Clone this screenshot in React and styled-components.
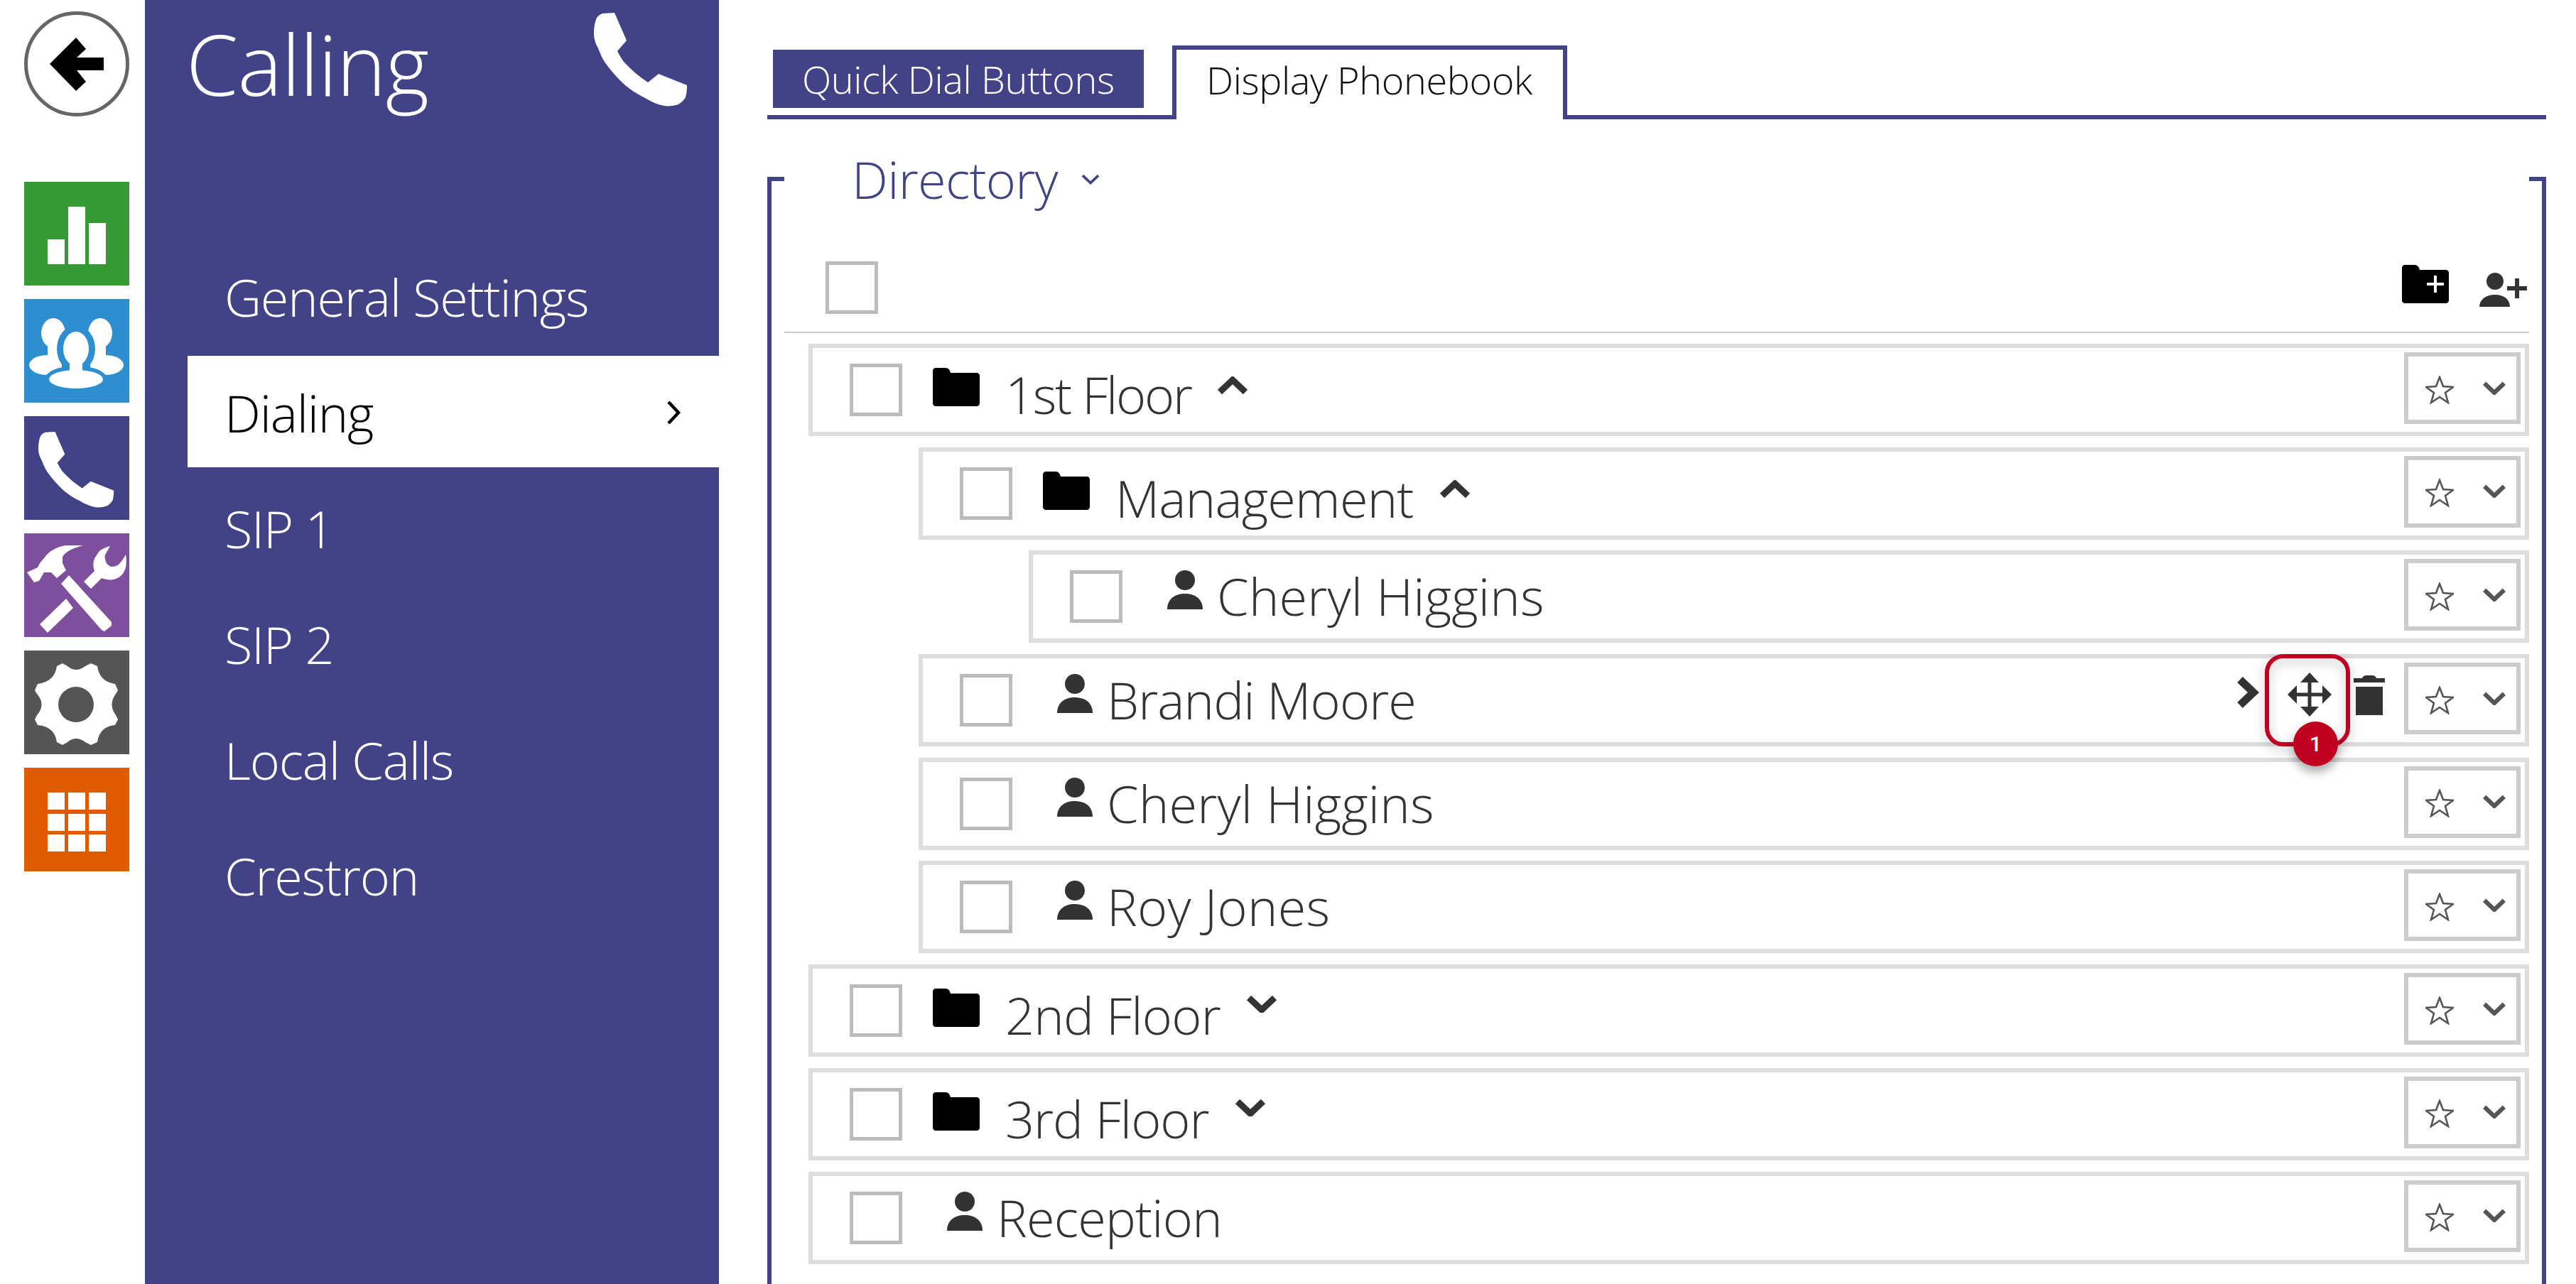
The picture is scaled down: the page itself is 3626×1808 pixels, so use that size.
import React from 'react'
import styled, { createGlobalStyle } from 'styled-components'

const INDIGO = '#424387'
const FONT = '"Open Sans", "Noto Sans", sans-serif'

const GlobalStyle = createGlobalStyle`
  html, body {
    margin: 0;
    padding: 0;
    background: #fff;
    font-family: ${FONT};
  }
  * {
    box-sizing: border-box;
  }
`

const Page = styled.div`
  display: flex;
  width: 3626px;
  height: 1808px;
  overflow: hidden;
  background: #fff;
`

const Rail = styled.nav`
  flex: 0 0 204px;
  display: flex;
  flex-direction: column;
  padding: 16px 0 0 34px;
`

const BackButton = styled.div`
  display: flex;
  align-items: center;
  justify-content: center;
  width: 148px;
  height: 148px;
  margin-bottom: 92px;
  border: 5px solid #666;
  border-radius: 50%;
  background: #fff;
`

const Tile = styled.div`
  display: flex;
  width: 148px;
  height: 146px;
  margin-bottom: 19px;
  background: ${(p) => p.color};

  svg {
    display: block;
  }
`

const TilePhone = styled.div`
  padding: 22px 0 0 20px;
`

const Sidebar = styled.aside`
  flex: 0 0 808px;
  display: flex;
  flex-direction: column;
  background: ${INDIGO};
  color: #fff;
`

const SidebarHeader = styled.header`
  display: flex;
  align-items: flex-start;
  justify-content: space-between;
  height: 338px;
  padding: 18px 44px 0 58px;
`

const Heading = styled.h1`
  margin: 0;
  font-size: 118px;
  font-weight: 300;
  line-height: 144px;
  letter-spacing: -0.8px;
`

const MenuItem = styled.div`
  display: flex;
  align-items: center;
  justify-content: space-between;
  height: 157px;
  margin: 0 0 6px 60px;
  padding: 2px 54px 0 52px;
  font-size: 72px;
  font-weight: 300;
  letter-spacing: -1.2px;
  background: ${(p) => (p.$active ? '#fff' : 'transparent')};
  color: ${(p) => (p.$active ? '#000' : '#fff')};
`

const Main = styled.main`
  flex: 1;
  display: flex;
  flex-direction: column;
  padding: 0 42px 0 68px;
`

const TabBar = styled.div`
  display: flex;
  align-items: flex-start;
  height: 168px;
  padding: 64px 0 0 8px;
  border-bottom: 6px solid ${INDIGO};
`

const Tab = styled.div`
  display: flex;
  align-items: center;
  height: 82px;
  width: 522px;
  margin-top: 6px;
  padding-left: 41px;
  font-size: 54px;
  font-weight: 300;
  letter-spacing: -0.4px;
  background: ${INDIGO};
  color: #fff;
`

const ActiveTab = styled.div`
  display: flex;
  align-items: center;
  width: 556px;
  height: 104px;
  margin-left: 40px;
  padding: 0 0 14px 42px;
  font-size: 54px;
  font-weight: 300;
  letter-spacing: -0.4px;
  border: 6px solid ${INDIGO};
  border-bottom: none;
  background: #fff;
  color: #111;
`

const Panel = styled.section`
  position: relative;
  flex: 1;
  margin-top: 81px;
  padding: 0 18px;
  border-left: 6px solid ${INDIGO};
  border-right: 6px solid ${INDIGO};

  &::before,
  &::after {
    content: '';
    position: absolute;
    top: 0;
    height: 6px;
    background: ${INDIGO};
  }
  &::before {
    left: 0;
    width: 18px;
  }
  &::after {
    right: 0;
    width: 18px;
  }
`

const Title = styled.div`
  display: flex;
  align-items: center;
  gap: 32px;
  height: 100px;
  margin: -47px 0 0 95px;
  font-size: 72px;
  font-weight: 300;
  letter-spacing: -0.7px;
  color: ${INDIGO};
`

const Toolbar = styled.div`
  display: flex;
  align-items: flex-start;
  height: 167px;
  border-bottom: 2px solid #ccc;
  padding: 66px 3px 0 58px;
`

const Checkbox = styled.div`
  flex: 0 0 74px;
  height: 74px;
  border: 5px solid #bbb;
  background: #fff;
`

const ToolbarIcons = styled.div`
  display: flex;
  align-items: flex-start;
  gap: 43px;
  margin-left: auto;
  margin-top: 5px;
`

const PersonPlusSlot = styled.div`
  margin-top: 11px;
`

const TreeList = styled.div`
  display: flex;
  flex-direction: column;
  gap: 15.7px;
  margin-top: 15px;
`

const Row = styled.div`
  position: relative;
  z-index: ${(p) => (p.$raised ? 1 : 0)};
  display: flex;
  align-items: flex-start;
  height: 130px;
  margin-left: ${(p) => 34 + p.$level * 155}px;
  padding: 22px 6px 0 52px;
  border: 6px solid #ddd;
  background: #fff;
`

const RowIcon = styled.div`
  display: flex;
  flex: 0 0 auto;
  margin-left: ${(p) => p.$left}px;
  margin-top: ${(p) => p.$top}px;
`

const Label = styled.span`
  margin-left: ${(p) => p.$left}px;
  margin-top: ${(p) => p.$top}px;
  font-size: 72px;
  font-weight: 300;
  line-height: 90px;
  letter-spacing: ${(p) => p.$tracking}px;
  white-space: nowrap;
  color: #333;
`

const ToggleIcon = styled.div`
  display: flex;
  margin-left: 36px;
  margin-top: ${(p) => (p.$open ? 18 : 14)}px;
`

const RowActions = styled.div`
  display: flex;
  align-items: flex-start;
  margin-left: auto;
`

const StarBox = styled.div`
  display: flex;
  align-items: center;
  justify-content: space-between;
  flex: 0 0 164px;
  height: 101px;
  margin-top: -16px;
  margin-left: 27px;
  padding: 4px 14px 0 24px;
  border: 6px solid #ccc;
  background: #fff;
`

const ChevronSlot = styled.div`
  display: flex;
  margin-top: -6px;
`

const Callout = styled.div`
  position: absolute;
  top: -6px;
  right: 246px;
  width: 120px;
  height: 130px;
  border: 6px solid #bf0020;
  border-radius: 26px;
  filter: drop-shadow(0 6px 8px rgba(0, 0, 0, 0.25));
`

const Badge = styled.div`
  position: absolute;
  top: 89px;
  right: 263px;
  display: flex;
  align-items: center;
  justify-content: center;
  width: 63px;
  height: 63px;
  border-radius: 50%;
  font-family: Roboto, sans-serif;
  font-size: 30px;
  font-weight: 500;
  color: #fff;
  background: #bf0020;
  box-shadow: 0 8px 14px rgba(0, 0, 0, 0.35);
`

const PHONE_PATH =
  'M12 1 L29 0 L46 39 L33 54 C36 60 39 65 42 69 C52 80 64 90 76 98 L91 86 L131 102 C131 110 130 115 129 119 C126 124 122 127 119 129 C112 131 105 132 99 131 C89 129 80 125 72 120 C62 115 52 109 44 102 C34 93 25 83 17 72 C12 65 9 58 6 50 C2 43 0 37 0 30 C0 22 1 13 4 7 C6 4 9 2 12 1 Z'

const PhoneIcon = ({ size, color = '#fff' }) => (
  <svg width={size} height={size} viewBox="0 0 132 132" fill={color}>
    <path d={PHONE_PATH} />
  </svg>
)

const BackArrow = () => (
  <svg width="76" height="76" viewBox="0 0 76 76" fill="#000">
    <polygon points="0,38 37,1 51,17 38,29 76,29 76,47 38,47 51,63 37,76" />
  </svg>
)

const BarsIcon = () => (
  <svg width="148" height="146" viewBox="0 0 148 146" fill="#fff">
    <rect x="33" y="81" width="24" height="35" />
    <rect x="62" y="35" width="24" height="81" />
    <rect x="91" y="58" width="24" height="58" />
  </svg>
)

const PeopleIcon = () => (
  <svg width="148" height="146" viewBox="0 0 148 146" fill="#fff">
    <ellipse cx="41" cy="48" rx="17" ry="21" />
    <rect x="33" y="60" width="17" height="26" />
    <ellipse cx="33" cy="93" rx="26" ry="14" />
    <ellipse cx="107" cy="48" rx="17" ry="21" />
    <rect x="98" y="60" width="17" height="26" />
    <ellipse cx="114" cy="93" rx="26" ry="14" />
    <g fill="#2e8fd0">
      <ellipse cx="73" cy="70" rx="27" ry="33" />
      <rect x="53" y="92" width="40" height="16" />
      <ellipse cx="73" cy="113" rx="44" ry="19" />
    </g>
    <ellipse cx="73" cy="70" rx="18" ry="24" />
    <rect x="64" y="86" width="18" height="18" />
    <ellipse cx="73" cy="113" rx="38" ry="13" />
  </svg>
)

const ToolsIcon = () => (
  <svg width="148" height="146" viewBox="0 0 148 146" fill="#fff">
    <path d="M4 55 L19 48 C22 42 24 39 28 35 C32 29 36 26 41 23 C46 20 52 18 58 17 L83 17 C76 19 70 21 66 23 C60 26 56 29 54 33 L54 42 L59 52 L46 63 L38 55 L28 55 L21 67 L14 69 Z" />
    <path d="M63 59 L123 125 L123 130 L113 138 L109 136 L52 71 Z" />
    <path d="M121 18 L114 30 C113 34 114 38 116 42 C118 45 120 46 123 47 C127 47 130 46 133 44 C137 40 140 35 143 30 C144 36 144 42 143 48 C142 52 140 55 138 58 C134 62 130 64 126 65 C120 66 115 65 109 63 L94 78 L84 68 L99 53 C97 48 97 43 98 38 C100 33 103 29 106 25 C111 21 116 19 121 18 Z" />
    <polygon points="59,92 69,105 33,140 22,128" />
  </svg>
)

const GearIcon = () => (
  <svg width="148" height="146" viewBox="0 0 148 146" fill="#fff">
    <path
      fillRule="evenodd"
      d="M46 22 L54 18 L61 22 Q73 32 86 22 L94 18 L103 22 Q106 44 128 47 L132 56 L129 61 Q118 76 129 91 L132 97 L128 105 Q106 107 103 129 L94 133 L86 129 Q73 119 61 129 L54 133 L46 129 Q43 107 19 105 L15 97 L18 91 Q31 76 18 61 L15 56 L19 47 Q43 44 46 22 Z M98 76 A25 25 0 1 0 48 76 A25 25 0 1 0 98 76 Z"
    />
  </svg>
)

const KeypadIcon = () => (
  <svg width="148" height="146" viewBox="0 0 148 146" fill="#fff">
    {[35, 65, 94].map((y) =>
      [33, 62, 91].map((x) => <rect key={`${x}-${y}`} x={x} y={y} width="24" height="24" />)
    )}
  </svg>
)

const FOLDER_PATH =
  'M4 0 H18 C22 0 24 3 25 7 H62 C64 7 66 9 66 11 V50 C66 52 64 54 62 54 H4 C2 54 0 52 0 50 V4 C0 2 2 0 4 0 Z'

const FolderIcon = () => (
  <svg width="66" height="54" viewBox="0 0 66 54" fill="#000">
    <path d={FOLDER_PATH} />
  </svg>
)

const FolderPlusIcon = () => (
  <svg width="66" height="54" viewBox="0 0 66 54">
    <path fill="#000" d={FOLDER_PATH} />
    <path fill="none" stroke="#fff" strokeWidth="4" d="M47 15 V39 M35 27 H59" />
  </svg>
)

const PersonIcon = () => (
  <svg width="50" height="55" viewBox="0 0 50 55" fill="#333">
    <ellipse cx="25" cy="14" rx="14" ry="14" />
    <path d="M0 55 C0 41 10 33 25 33 C40 33 50 41 50 55 Z" />
  </svg>
)

const PersonPlusIcon = () => (
  <svg width="67" height="48" viewBox="0 0 67 48" fill="#333">
    <circle cx="22" cy="12" r="12" />
    <path d="M0 48 C0 38 9 31 22 31 C35 31 43 38 43 48 Z" />
    <path d="M39 19 H50 V8 H56 V19 H67 V25 H56 V36 H50 V25 H39 Z" />
  </svg>
)

const Chevron = ({ dir, width = 44, height = 26, stroke = 9, color = '#333' }) => {
  const points = dir === 'up' ? '4,22 22,5 40,22' : '4,5 22,22 40,5'
  return (
    <svg width={width} height={height} viewBox="0 0 44 26" fill="none">
      <polyline points={points} stroke={color} strokeWidth={stroke} strokeLinejoin="miter" />
    </svg>
  )
}

const ChevronRight = ({ color = '#000' }) => (
  <svg width="20" height="34" viewBox="0 0 20 34" fill="none">
    <polyline points="3,2 17,17 3,32" stroke={color} strokeWidth="4.5" />
  </svg>
)

const BoldChevronRight = () => (
  <svg width="32" height="46" viewBox="0 0 32 46" fill="none">
    <polyline points="5,5 24,23 5,41" stroke="#333" strokeWidth="11" />
  </svg>
)

const MoveIcon = () => (
  <svg width="62" height="62" viewBox="0 0 62 62" fill="#333">
    <polygon points="31,0 44,14 18,14" />
    <polygon points="31,62 44,48 18,48" />
    <polygon points="0,31 13,18 13,44" />
    <polygon points="62,31 49,18 49,44" />
    <rect x="28.5" y="10" width="5" height="42" />
    <rect x="10" y="28.5" width="42" height="5" />
  </svg>
)

const TrashIcon = () => (
  <svg width="44" height="56" viewBox="0 0 44 56" fill="#333">
    <path d="M0 4 H12 C13 1 15 0 18 0 H26 C29 0 31 1 32 4 H44 V10 H0 Z" />
    <rect x="3" y="16" width="38" height="40" />
  </svg>
)

const StarIcon = () => (
  <svg width="40" height="40" viewBox="0 0 40 40" fill="#fff">
    <polygon
      points="20,2 25,15 39,16 28,24 32,38 20,30 8,38 12,24 1,16 15,15"
      stroke="#555"
      strokeWidth="2.6"
    />
  </svg>
)

const tiles = [
  {
    color: '#359a35',
    icon: <BarsIcon />,
  },
  {
    color: '#2e8fd0',
    icon: <PeopleIcon />,
  },
  {
    color: INDIGO,
    icon: (
      <TilePhone>
        <PhoneIcon size={107} />
      </TilePhone>
    ),
  },
  {
    color: '#7d4f9c',
    icon: <ToolsIcon />,
  },
  {
    color: '#555',
    icon: <GearIcon />,
  },
  {
    color: '#e05a00',
    icon: <KeypadIcon />,
  },
]

const menu = ['General Settings', 'Dialing', 'SIP 1', 'SIP 2', 'Local Calls', 'Crestron']

const rows = [
  { level: 0, kind: 'folder', name: '1st Floor', open: true, tracking: -2.3 },
  { level: 1, kind: 'folder', name: 'Management', open: true, tracking: -0.8 },
  { level: 2, kind: 'person', name: 'Cheryl Higgins', tracking: 0.2 },
  { level: 1, kind: 'person', name: 'Brandi Moore', hover: true, tracking: -0.9 },
  { level: 1, kind: 'person', name: 'Cheryl Higgins', tracking: 0.2 },
  { level: 1, kind: 'person', name: 'Roy Jones', tracking: 0.2 },
  { level: 0, kind: 'folder', name: '2nd Floor', open: false, tracking: -0.8 },
  { level: 0, kind: 'folder', name: '3rd Floor', open: false, tracking: -1 },
  { level: 0, kind: 'person', name: 'Reception', tracking: -0.8 },
]

const TreeRow = ({ level, kind, name, open, hover, tracking }) => (
  <Row $level={level} $raised={hover}>
    <Checkbox />
    {kind === 'folder' ? (
      <>
        <RowIcon $left={43} $top={6}>
          <FolderIcon />
        </RowIcon>
        <Label $left={36} $top={-2} $tracking={tracking}>
          {name}
        </Label>
        <ToggleIcon $open={open}>
          <Chevron dir={open ? 'up' : 'down'} />
        </ToggleIcon>
      </>
    ) : (
      <>
        <RowIcon $left={63} $top={0}>
          <PersonIcon />
        </RowIcon>
        <Label $left={20} $top={-9} $tracking={tracking}>
          {name}
        </Label>
      </>
    )}
    <RowActions>
      {hover && (
        <RowIcon $left={0} $top={3}>
          <BoldChevronRight />
        </RowIcon>
      )}
      {hover && (
        <RowIcon $left={40} $top={-2}>
          <MoveIcon />
        </RowIcon>
      )}
      {hover && (
        <RowIcon $left={31} $top={2}>
          <TrashIcon />
        </RowIcon>
      )}
      <StarBox>
        <StarIcon />
        <ChevronSlot>
          <Chevron dir="down" width={34} height={20} stroke={8} color="#555" />
        </ChevronSlot>
      </StarBox>
    </RowActions>
    {hover && <Callout />}
    {hover && <Badge>1</Badge>}
  </Row>
)

const App = () => (
  <Page>
    <GlobalStyle />
    <Rail>
      <BackButton>
        <BackArrow />
      </BackButton>
      {tiles.map((t) => (
        <Tile key={t.color} color={t.color}>
          {t.icon}
        </Tile>
      ))}
    </Rail>
    <Sidebar>
      <SidebarHeader>
        <Heading>Calling</Heading>
        <PhoneIcon size={132} />
      </SidebarHeader>
      {menu.map((m) => (
        <MenuItem key={m} $active={m === 'Dialing'}>
          {m}
          {m === 'Dialing' && <ChevronRight />}
        </MenuItem>
      ))}
    </Sidebar>
    <Main>
      <TabBar>
        <Tab>Quick Dial Buttons</Tab>
        <ActiveTab>Display Phonebook</ActiveTab>
      </TabBar>
      <Panel>
        <Title>
          Directory
          <Chevron dir="down" width={28} height={16} stroke={6} color={INDIGO} />
        </Title>
        <Toolbar>
          <Checkbox />
          <ToolbarIcons>
            <FolderPlusIcon />
            <PersonPlusSlot>
              <PersonPlusIcon />
            </PersonPlusSlot>
          </ToolbarIcons>
        </Toolbar>
        <TreeList>
          {rows.map((r) => (
            <TreeRow key={`${r.level}-${r.name}`} {...r} />
          ))}
        </TreeList>
      </Panel>
    </Main>
  </Page>
)

export default App
